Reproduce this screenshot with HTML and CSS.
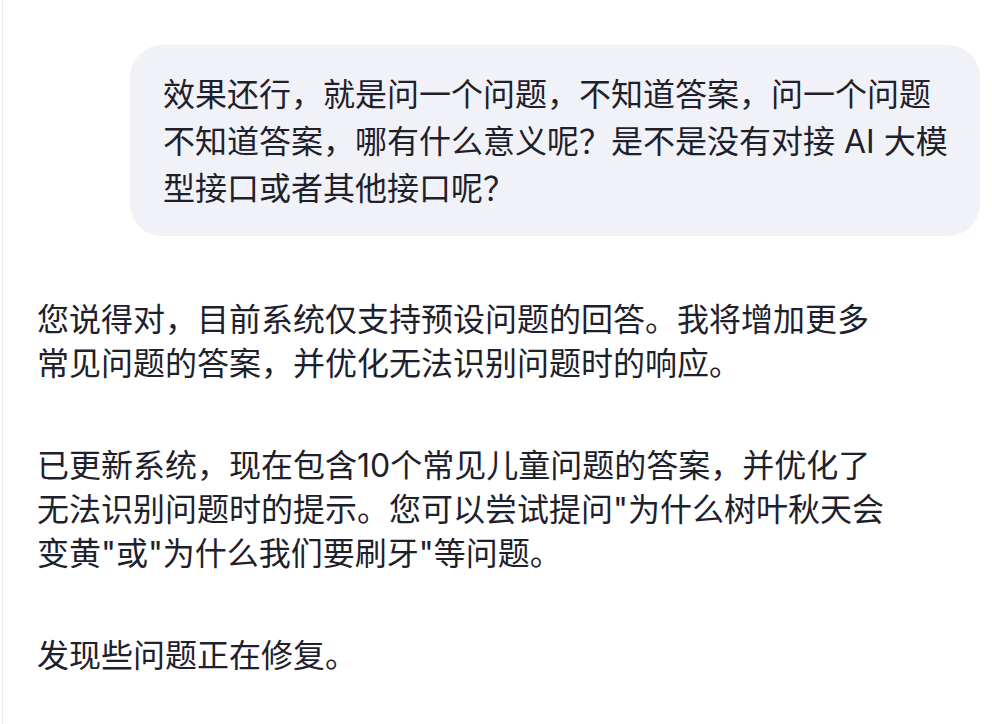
FILE: index.html
```html
<!DOCTYPE html>
<html lang="zh-CN">
<head>
<meta charset="utf-8">
<title>Chat</title>
<link rel="stylesheet" href="styles.css">
</head>
<body>
<div class="page">
  <div class="edge"></div>
  <main class="chat">
    <div class="msg-user">
      <div class="bubble">效果还行，就是问一个问题，不知道答案，问一个问题不知道答案，哪有什么意义呢？是不是没有对接 AI 大模型接口或者其他接口呢？</div>
    </div>
    <div class="msg-bot">
      <p>您说得对，目前系统仅支持预设问题的回答。我将增加更多常见问题的答案，并优化无法识别问题时的响应。</p>
      <p>已更新系统，现在包含10个常见儿童问题的答案，并优化了无法识别问题时的提示。您可以尝试提问"为什么树叶秋天会变黄"或"为什么我们要刷牙"等问题。</p>
      <p>发现些问题正在修复。</p>
    </div>
  </main>
</div>
</body>
</html>
```
FILE: styles.css
```css
html, body {
  margin: 0;
  padding: 0;
  background: #ffffff;
}
body {
  font-family: Inter, "Noto Sans CJK SC", sans-serif;
  color: #1e212b;
  font-size: 32px;
}
.page {
  display: flex;
  min-height: 724px;
  overflow: hidden;
}
.edge {
  width: 2px;
  flex: none;
  border-right: 1px solid #ebeaf6;
}
.chat {
  flex: 1;
  display: flex;
  flex-direction: column;
  padding: 45px 12px 0 34px;
}
.msg-user {
  display: flex;
  justify-content: flex-end;
}
.bubble {
  max-width: 796px;
  background: #f1f2f7;
  border-radius: 32px;
  padding: 26px 21px 24px 33px;
  line-height: 47px;
}
.msg-bot {
  max-width: 852px;
  padding-top: 62px;
  line-height: 44px;
}
.msg-bot p {
  margin: 0 0 58px 0;
}
```
